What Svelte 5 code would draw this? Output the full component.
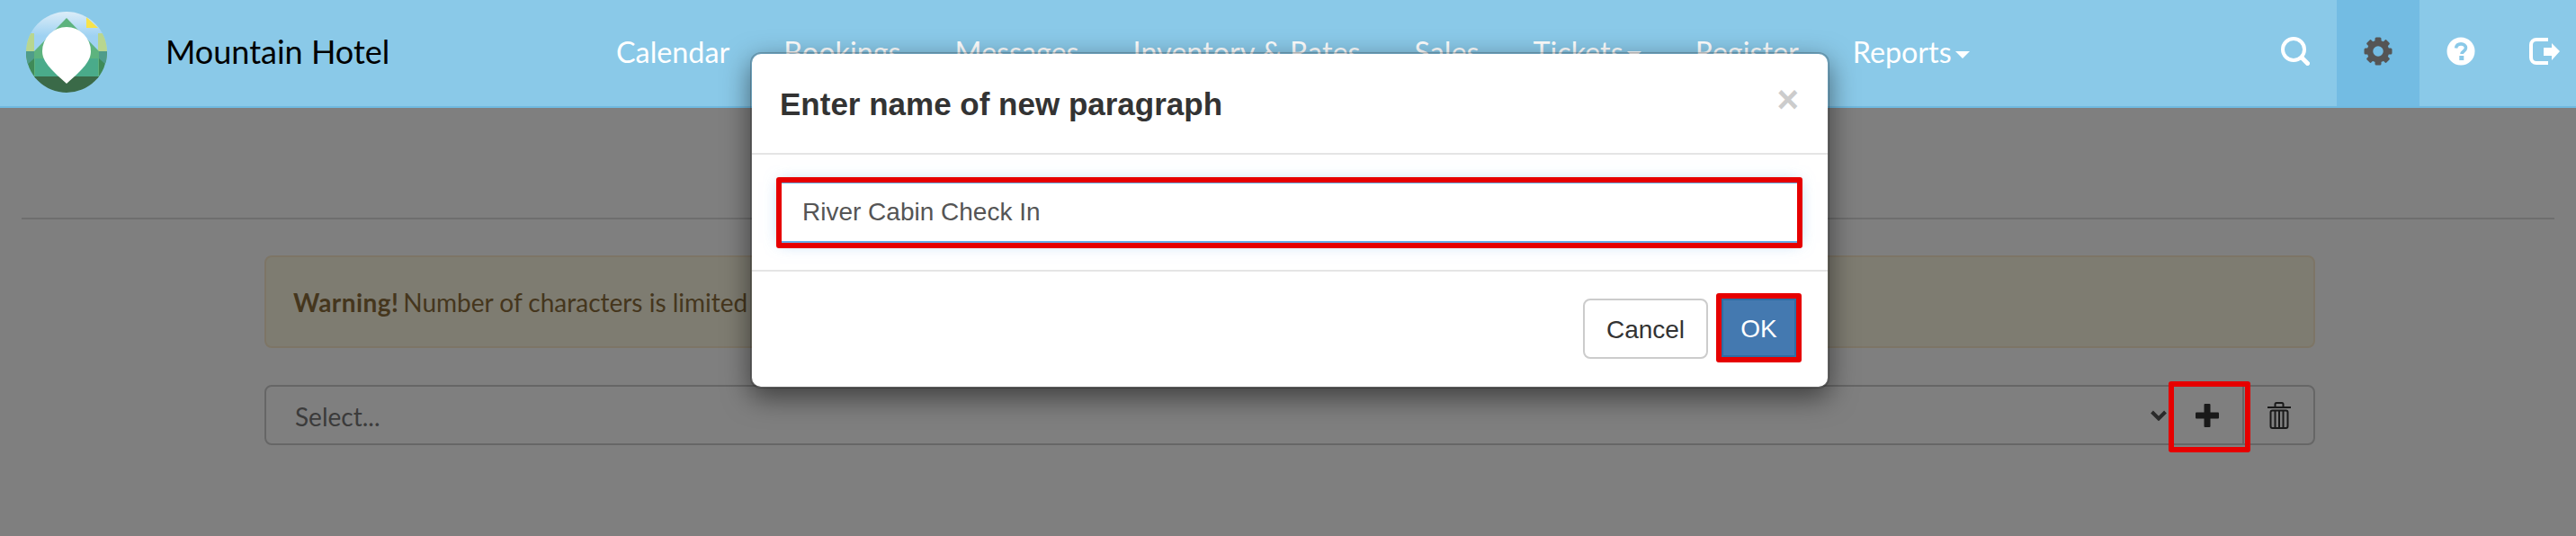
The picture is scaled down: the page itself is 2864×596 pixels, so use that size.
<script>
  const navItems = [
    { label: 'Calendar' },
    { label: 'Bookings' },
    { label: 'Messages' },
    { label: 'Inventory & Rates' },
    { label: 'Sales' },
    { label: 'Tickets', caret: true },
    { label: 'Register' },
    { label: 'Reports', caret: true }
  ];
  const gearTeeth = [0, 45, 90, 135, 180, 225, 270, 315];
</script>

<div class="screen">
  <header class="navbar">
    <div class="brand">
      <svg class="logo" width="90" height="90" viewBox="0 0 90 90">
        <defs>
          <linearGradient id="sky" x1="0" y1="0" x2="0" y2="1">
            <stop offset="0" stop-color="#dcedf8" />
            <stop offset="0.3" stop-color="#9fd2f2" />
            <stop offset="1" stop-color="#9fd2f2" />
          </linearGradient>
          <clipPath id="disc"><circle cx="45" cy="45" r="45" /></clipPath>
        </defs>
        <g clip-path="url(#disc)">
          <rect width="90" height="90" fill="url(#sky)" />
          <rect x="0" y="24" width="9" height="30" fill="#b8d68f" />
          <rect x="80" y="24" width="10" height="30" fill="#b8d68f" />
          <polygon points="67,6 67,18 80,18" fill="#f7e34a" />
          <rect x="0" y="44" width="90" height="30" fill="#3f8a58" />
          <polygon points="0,44 9,44 9,52 0,60" fill="#4f9c8a" />
          <polygon points="90,44 81,44 81,52 90,60" fill="#4f9c8a" />
          <polygon points="45,7 81,44 81,72 9,72 9,44" fill="#5db37e" />
          <rect x="10" y="52" width="70" height="20" fill="#4aab8a" />
          <polygon points="0,72 90,72 90,90 0,90" fill="#3a6a48" />
          <path d="M45 17a27 27 0 0 1 27 27c0 11-9 20-27 36C27 64 18 55 18 44a27 27 0 0 1 27-27z" fill="#fff" />
        </g>
      </svg>
      <span class="brand-name">Mountain Hotel</span>
    </div>

    <nav class="nav-links">
      {#each navItems as item}
        <span class="nav-link">
          {item.label}{#if item.caret}<i class="caret"></i>{/if}
        </span>
      {/each}
    </nav>

    <div class="nav-icons">
      <span class="icon-cell">
        <svg width="32" height="32" viewBox="0 0 32 32" fill="none" stroke="#fff">
          <circle cx="14" cy="14" r="12" stroke-width="4" />
          <line x1="23" y1="23" x2="29.5" y2="29.5" stroke-width="5" stroke-linecap="round" />
        </svg>
      </span>
      <span class="icon-cell active">
        <svg width="32" height="32" viewBox="0 0 32 32">
          {#each gearTeeth as angle}
            <rect x="12.5" y="0.5" width="7" height="7" rx="1.5" fill="#555" transform="rotate({angle} 16 16)" />
          {/each}
          <circle cx="16" cy="16" r="9" fill="none" stroke="#555" stroke-width="6.5" />
        </svg>
      </span>
      <span class="icon-cell">
        <svg width="32" height="32" viewBox="0 0 32 32">
          <circle cx="16" cy="16" r="15.5" fill="#fff" />
          <path d="M10.5 12.5c.5-3 2.8-4.6 5.6-4.6 3.2 0 5.4 1.8 5.4 4.4 0 3.600-4.500 3.600-4.500 6.700" fill="none" stroke="#8ac9e8" stroke-width="3.600" />
          <rect x="14.300" y="21" width="5" height="5" fill="#8ac9e8" />
        </svg>
      </span>
      <span class="icon-cell last">
        <svg width="34" height="30" viewBox="0 0 34 30">
          <path d="M21 2H8a6 6 0 0 0-6 6v14a6 6 0 0 0 6 6h13" fill="none" stroke="#fff" stroke-width="4" />
          <path d="M16 11h9V6l9 9-9 10v-5h-9z" fill="#fff" />
        </svg>
      </span>
    </div>
  </header>

  <main class="page">
    <hr class="rule" />
    <section class="content">
      <div class="alert"><strong>Warning!</strong> Number of characters is limited</div>
      <div class="picker">
        <div class="select">
          <span class="select-value">Select...</span>
          <svg width="18" height="12" viewBox="0 0 18 12" fill="none" stroke="#555" stroke-width="4">
            <path d="M1.500 2 9 9.500 16.500 2" />
          </svg>
        </div>
        <div class="picker-btn add">
          <svg class="plus" width="26" height="26" viewBox="0 0 26 26" fill="#333">
            <rect x="9.500" y="0" width="7" height="26" rx="1" />
            <rect x="0" y="9.500" width="26" height="7" rx="1" />
          </svg>
          <span class="marker add-marker"></span>
        </div>
        <div class="picker-btn trash">
          <svg width="26" height="30" viewBox="0 0 26 30" fill="none" stroke="#333" stroke-width="2">
            <path d="M0 6h26M8.500 5V2.500A1.500 1.500 0 0 1 10 1h6a1.500 1.500 0 0 1 1.500 1.500V5" />
            <rect x="3.500" y="9.500" width="19" height="19.500" rx="2" />
            <path d="M8.500 10v18M13 10v18M17.500 10v18" />
          </svg>
        </div>
      </div>
    </section>
  </main>

  <div class="backdrop"></div>

  <div class="modal">
    <div class="modal-header">
      <h4>Enter name of new paragraph</h4>
      <span class="close">×</span>
    </div>
    <div class="modal-body">
      <div class="input">
        River Cabin Check In
        <span class="marker input-marker"></span>
      </div>
    </div>
    <div class="modal-footer">
      <button class="btn">Cancel</button>
      <button class="btn primary">OK<span class="marker"></span></button>
    </div>
  </div>
</div>

<style>
  :global(body) {
    margin: 0;
    background: #fff;
  }

  .screen {
    position: relative;
    width: 2864px;
    height: 596px;
    overflow: hidden;
    font-family: Lato, sans-serif;
  }

  .navbar {
    position: relative;
    z-index: 2;
    display: flex;
    align-items: stretch;
    height: 118px;
    background: #8ac9e8;
    border-bottom: 2px solid #6fb9e0;
  }

  .brand {
    display: flex;
    align-items: center;
    width: 655px;
    padding-left: 29px;
    box-sizing: border-box;
  }

  .logo {
    margin-top: -2px;
    flex: none;
  }

  .brand-name {
    margin: 0 0 4px 65px;
    font-size: 36px;
    color: #000;
  }

  .nav-links {
    display: flex;
    align-items: center;
    padding-bottom: 4px;
  }

  .nav-link {
    padding: 0 30px;
    font-size: 32.3px;
    color: #fff;
    white-space: nowrap;
  }

  .caret {
    display: inline-block;
    margin-left: 4px;
    vertical-align: middle;
    border-top: 8px solid #fff;
    border-left: 8px solid transparent;
    border-right: 8px solid transparent;
  }

  .nav-icons {
    display: flex;
    margin-left: auto;
  }

  .icon-cell {
    display: flex;
    align-items: center;
    justify-content: center;
    width: 92px;
    padding-bottom: 4px;
    box-sizing: border-box;
  }

  .icon-cell.active {
    background: #73bce3;
  }

  .icon-cell.last {
    width: 82px;
    justify-content: flex-start;
    padding-left: 30px;
  }

  .page {
    padding: 122px 24px 0;
  }

  .rule {
    margin: 0;
    border: 0;
    border-top: 2px solid #ddd;
  }

  .content {
    padding: 40px 266px 0 270px;
  }

  .alert {
    height: 103px;
    box-sizing: border-box;
    padding: 0 30px;
    display: flex;
    align-items: center;
    gap: 5px;
    font-size: 28px;
    color: #8a6d3b;
    background: #fcf8e3;
    border: 2px solid #faebcc;
    border-radius: 8px;
  }

  .alert strong {
    letter-spacing: 0.45px;
  }

  .picker {
    display: flex;
    height: 67px;
    box-sizing: border-box;
    margin-top: 41px;
    border: 2px solid #ccc;
    border-radius: 8px;
  }

  .select {
    flex: 1;
    display: flex;
    align-items: center;
    justify-content: space-between;
    padding: 0 9px 0 32px;
    font-size: 28px;
    color: #777;
  }

  .select-value {
    margin-top: 3px;
  }

  .picker-btn {
    position: relative;
    display: flex;
    align-items: center;
    justify-content: center;
  }

  .add {
    width: 75px;
    border-right: 2px solid #ccc;
  }

  .plus {
    margin-right: 3px;
  }

  .trash {
    width: 77px;
  }

  .marker {
    position: absolute;
    inset: -8px;
    border: 6px solid #e60000;
    border-radius: 3px;
  }

  .add-marker {
    z-index: 2;
    inset: -6px -9px -10px -7px;
  }

  .input-marker {
    inset: -7px -6px -8px -6px;
  }

  .backdrop {
    position: absolute;
    inset: 0;
    z-index: 1;
    background: rgba(0, 0, 0, 0.5);
  }

  .modal {
    position: absolute;
    z-index: 3;
    top: 58px;
    left: 834px;
    width: 1200px;
    height: 374px;
    box-sizing: border-box;
    background: #fff;
    background-clip: padding-box;
    border: 2px solid rgba(0, 0, 0, 0.2);
    border-radius: 12px;
    box-shadow: 0 10px 30px rgba(0, 0, 0, 0.5);
    font-family: "Liberation Sans", Arial, sans-serif;
  }

  .modal-header {
    display: flex;
    align-items: center;
    justify-content: space-between;
    height: 110px;
    padding: 0 32px 0 31px;
    border-bottom: 2px solid #e5e5e5;
  }

  h4 {
    margin: 2px 0 0;
    font-size: 35px;
    font-weight: bold;
    color: #333;
  }

  .close {
    margin: -8px 0 0;
    font-size: 42px;
    font-weight: bold;
    color: #ccc;
    line-height: 1;
  }

  .modal-body {
    padding: 30px 32px 30px 31px;
    border-bottom: 2px solid #e5e5e5;
  }

  .input {
    position: relative;
    display: flex;
    align-items: center;
    height: 68px;
    box-sizing: border-box;
    padding: 0 23px;
    font-size: 28px;
    color: #555;
    border: 2px solid #66afe9;
    box-shadow: 0 0 16px rgba(102, 175, 233, 0.6);
  }

  .modal-footer {
    display: flex;
    justify-content: flex-end;
    gap: 15px;
    padding: 30px 35px 0 0;
  }

  .btn {
    position: relative;
    width: 139px;
    height: 67px;
    padding: 2px 0 0;
    font: 28px "Liberation Sans", Arial, sans-serif;
    color: #333;
    background: #fff;
    border: 2px solid #ccc;
    border-radius: 8px;
  }

  .btn.primary {
    width: 83px;
    height: 65px;
    color: #fff;
    background: #4479b0;
    border-color: #2e6da4;
    border-radius: 0;
  }
</style>
